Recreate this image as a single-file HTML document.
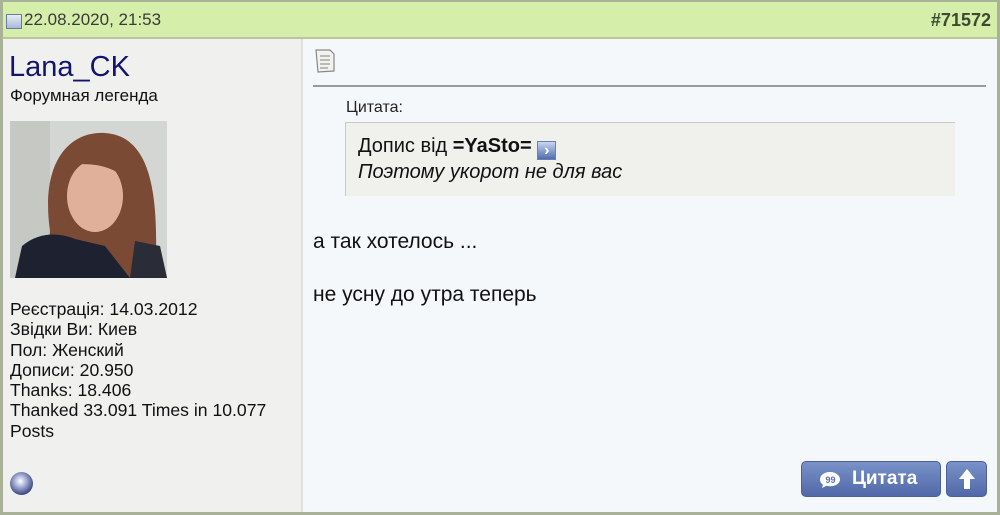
<!DOCTYPE html>
<html><head><meta charset="utf-8"><style>
*{margin:0;padding:0;box-sizing:border-box}
body{width:1000px;height:515px;overflow:hidden;background:#fff;font-family:"Liberation Sans",sans-serif;color:#111}
.wrap{position:absolute;left:0;top:0;width:1000px;height:515px;background:#f5f8fb}
.frame{position:absolute;left:0;top:0;width:1000px;height:515px;border:3px solid #a9b296;border-top-width:2px;pointer-events:none}
.hdr{position:absolute;left:0;top:0;width:1000px;height:39px;background:#d5eeaa;border-bottom:2px solid #b8c6a0}
.date{position:absolute;left:24px;top:10px;font-size:17px;color:#3a3a3a}
.dicon{position:absolute;left:6px;top:14px;width:16px;height:15px;background:linear-gradient(#e6ecf7,#aab8da);border:1px solid #6c7a9c}
.num{position:absolute;right:9px;top:10px;font-size:18px;font-weight:bold;color:#3c4a30}
.left{position:absolute;left:0;top:39px;width:303px;height:476px;background:#f0f1ee;border-right:2px solid #dfe1dc}
.name{position:absolute;left:9px;top:12px;font-size:29px;color:#14136e}
.rank{position:absolute;left:10px;top:47px;font-size:17px}
.stats{position:absolute;left:10px;top:260px;font-size:17.6px;line-height:20.3px}
.ball{position:absolute;left:10px;top:433px;width:23px;height:23px;border-radius:50%;background:radial-gradient(circle at 45% 40%,#fff 0,#b8c0e0 25%,#33407e 75%,#202a60 100%)}
.pic{position:absolute;left:10px;top:82px}
.q1{position:absolute;left:346px;top:99px;font-size:16px;color:#222}
.qbox{position:absolute;left:345px;top:122px;width:610px;height:74px;background:#f0f0ec;border:1px solid #c8c8c8;border-right:none;border-bottom:none}
.qt{position:absolute;left:12px;top:11px;font-size:20px;line-height:25px}
.body{position:absolute;left:313px;font-size:21px}
.hr{position:absolute;left:313px;top:85px;width:673px;height:2px;background:#9a9a9a}
.btn{position:absolute;top:461px;height:36px;border-radius:5px;background:linear-gradient(#7a92c8,#5068a8);color:#fff;font-weight:bold;font-size:19px;border:1px solid #4b5f98}
</style></head><body>
<div class="wrap">
<div class="hdr"><div class="dicon"></div><div class="date">22.08.2020, 21:53</div><div class="num">#71572</div></div>
<div class="left">
<div class="name">Lana_CK</div>
<div class="rank">Форумная легенда</div>
<svg class="pic" width="157" height="157" viewBox="0 0 157 157">
<rect width="157" height="157" fill="#d4d6d3"/>
<rect x="0" y="0" width="40" height="157" fill="#c6c8c4"/>
<path d="M40 110 C30 40 60 10 95 12 C140 15 150 70 145 157 L35 157 Z" fill="#7b4a34"/>
<ellipse cx="85" cy="75" rx="28" ry="36" fill="#e0b09a"/>
<path d="M55 45 C70 20 110 20 118 60 C105 45 80 40 55 45Z" fill="#7b4a34"/>
<path d="M5 157 L12 125 C30 110 50 112 65 118 L95 125 L120 157 Z" fill="#1e2230"/>
<path d="M125 120 L150 125 L157 157 L120 157Z" fill="#2a2c38"/>
</svg>
<div class="stats">Реєстрація: 14.03.2012<br>Звідки Ви: Киев<br>Пол: Женский<br>Дописи: 20.950<br>Thanks: 18.406<br>Thanked 33.091 Times in 10.077<br>Posts</div>
<div class="ball"></div>
</div>
<svg style="position:absolute;left:313px;top:48px" width="24" height="26" viewBox="0 0 24 26"><path d="M3 2 L17 2 L21 6 L21 23 L5 24 Z" fill="#f2f2ee" stroke="#888" stroke-width="1.2"/><path d="M7 8h10M7 12h10M7 16h10M7 20h8" stroke="#999" stroke-width="1.2"/></svg>
<div class="hr"></div>
<div class="q1">Цитата:</div>
<div class="qbox"><div class="qt">Допис від <b>=YaSto=</b> <span style="display:inline-block;width:19px;height:19px;vertical-align:-3px;background:linear-gradient(#c8d6f0,#4e6cb0);border:1px solid #6a80b0;color:#fff;font-size:16px;line-height:17px;text-align:center;font-weight:bold">›</span><br><i>Поэтому укорот не для вас</i></div></div>
<div class="body" style="top:230px">а так хотелось ...</div>
<div class="body" style="top:283px">не усну до утра теперь</div>
<div class="btn" style="left:801px;width:140px"><svg style="position:absolute;left:17px;top:9px" width="22" height="18" viewBox="0 0 22 18"><path d="M11 1C5 1 1 4.5 1 8.5c0 2.2 1.2 4 3 5.3L3 17l4.5-2.2c1.1.3 2.3.5 3.5.5 6 0 10-3.2 10-6.8S17 1 11 1z" fill="#fff"/><text x="6.5" y="12" font-size="9" font-weight="bold" fill="#5a70b0" font-family="Liberation Sans">99</text></svg><span style="position:absolute;left:50px;top:6px">Цитата</span></div>
<div class="btn" style="left:946px;width:41px"><svg style="position:absolute;left:11px;top:6px" width="18" height="22" viewBox="0 0 18 22"><path d="M9 1 L17 11 L12 11 L12 21 L6 21 L6 11 L1 11 Z" fill="#fff"/></svg></div>
</div>
<div class="frame"></div>
</body></html>
